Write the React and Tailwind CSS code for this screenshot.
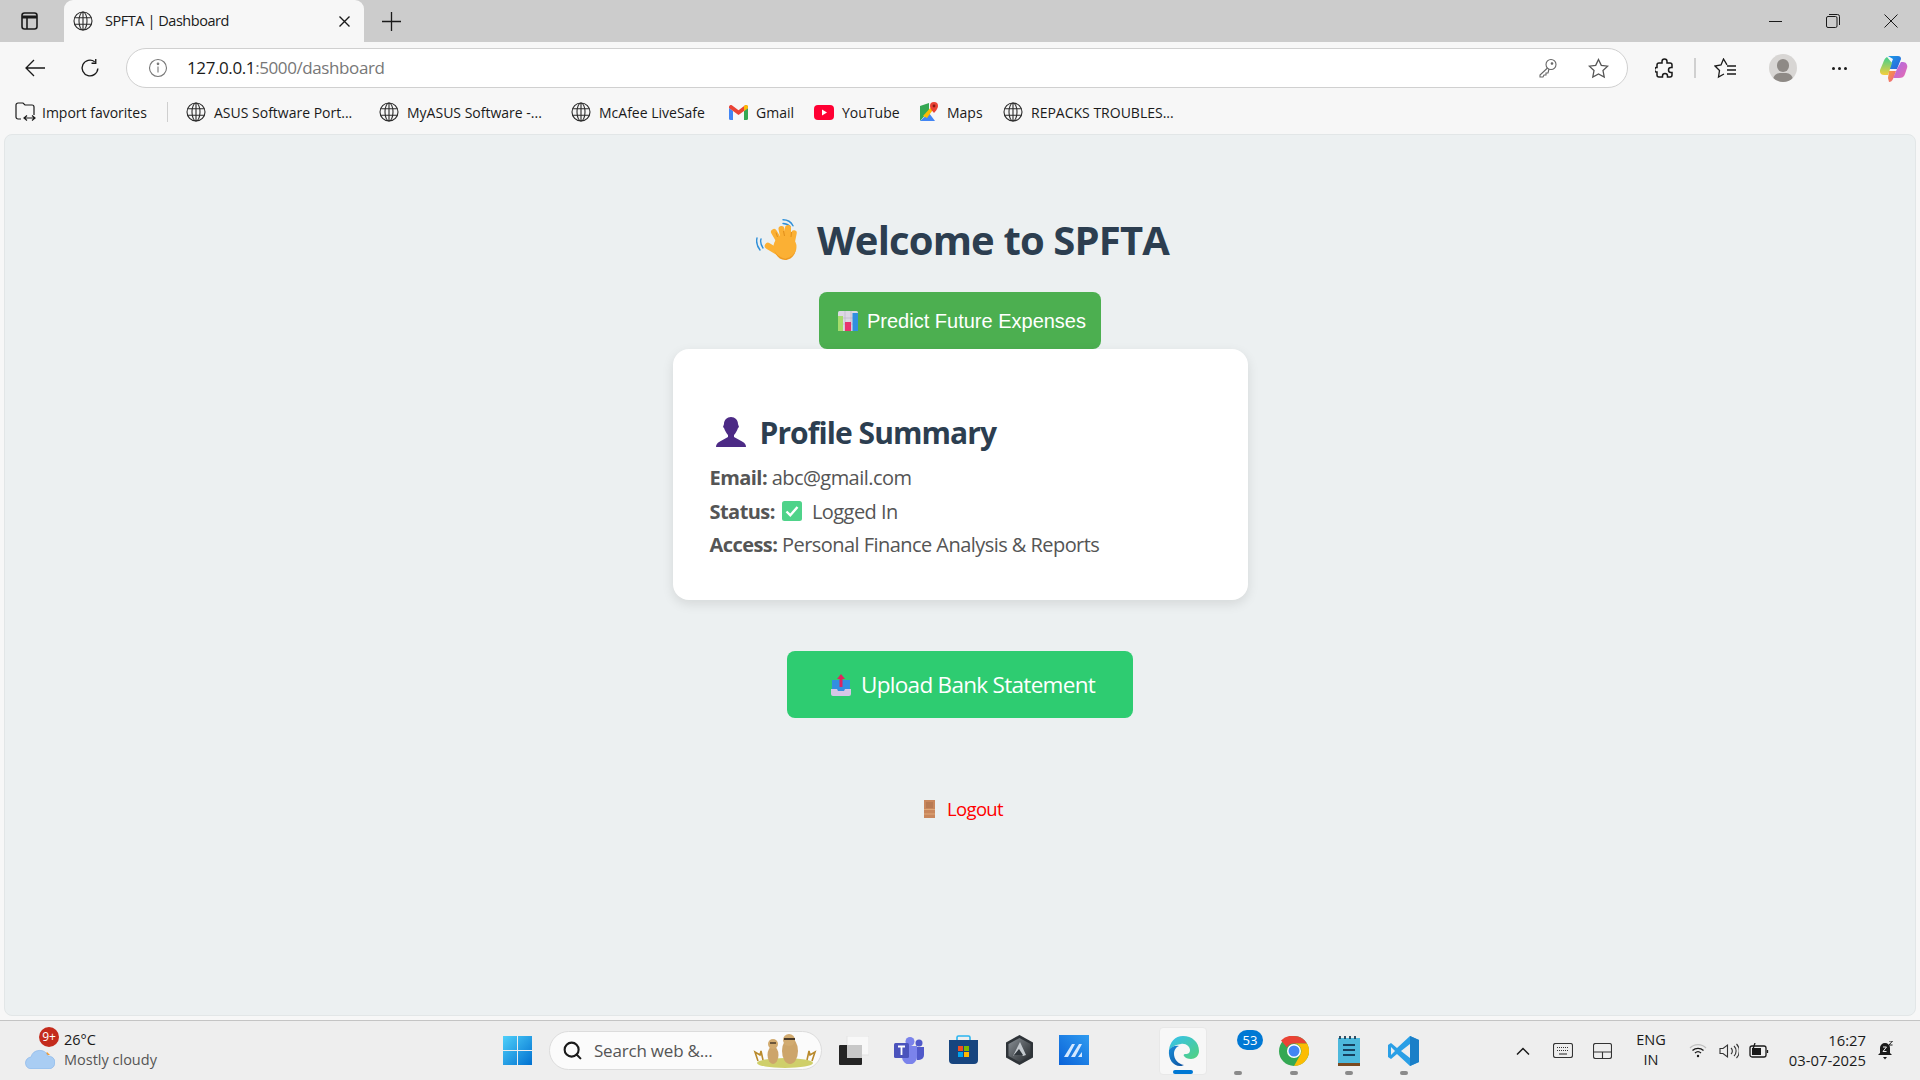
import { Search } from 'lucide-react';

const sans = "font-['Open_Sans','Noto_Sans',sans-serif]";

const Globe = ({ size = 20 }) => (
  <svg width={size} height={size} viewBox="0 0 20 20" fill="none" stroke="#2b2b2b" strokeWidth="1.1" className="shrink-0">
    <circle cx="10" cy="10" r="9" />
    <ellipse cx="10" cy="10" rx="4" ry="9" />
    <path d="M1.6 6.8h16.8M1.6 13.2h16.8M10 1v18" />
  </svg>
);

const Bookmark = ({ icon, label, width }) => (
  <div className={`flex items-center gap-[8px] shrink-0 ${width}`}>
    {icon}
    <span className="text-[14px] text-[#1a1a1a] whitespace-nowrap">{label}</span>
  </div>
);

const GmailIcon = () => (
  <svg width="19" height="15" viewBox="0 0 19 15" className="shrink-0">
    <path d="M0 3v10.5A1.5 1.5 0 0 0 1.5 15H4V6z" fill="#4285f4" />
    <path d="M19 3v10.5a1.5 1.5 0 0 1-1.5 1.5H15V6z" fill="#34a853" />
    <path d="M0 3l4 3 5.5 4L15 6l4-3V2c0-1.8-2-2.6-3.2-1.6L9.5 5.2 3.200.4C2 -.6 0 .2 0 2z" fill="#ea4335" />
    <path d="M15 6l4-3V2c0-1.800-2-2.600-3.200-1.600L15 1z" fill="#fbbc04" />
  </svg>
);

const YoutubeIcon = () => (
  <svg width="20" height="15" viewBox="0 0 20 15" className="shrink-0">
    <rect width="20" height="15" rx="4" fill="#ff0033" />
    <path d="M8 4.500l5 3-5 3z" fill="#fff" />
  </svg>
);

const MapsIcon = () => (
  <svg width="20" height="20" viewBox="0 0 20 20" className="shrink-0">
    <path d="M1 4l9-3v8L1 19z" fill="#34a853" />
    <path d="M1 19l9-8 6 8z" fill="#4285f4" />
    <path d="M4 14L14 3l2 2-8 11z" fill="#fbbc04" />
    <path d="M15 0a4 4 0 0 1 4 4c0 3-4 7-4 7s-4-4-4-7a4 4 0 0 1 4-4z" fill="#ea4335" />
    <circle cx="15" cy="4" r="1.400" fill="#8b1a12" />
  </svg>
);

const WaveEmoji = () => (
  <svg width="46" height="42" viewBox="0 0 46 42" className="shrink-0">
    <path d="M1 19c-1 4 0 8 3 12M5 20c-1 3 0 6 2 9" stroke="#2f8fd8" strokeWidth="1.400" fill="none" strokeLinecap="round" />
    <path d="M27 0.800c4 0 8 2 10 6M27 4.500c3 0 5 1 7 3" stroke="#2f8fd8" strokeWidth="1.400" fill="none" strokeLinecap="round" />
    <g stroke="#fbb034" strokeLinecap="round" fill="none">
      <path d="M25 25L18 13" strokeWidth="6" />
      <path d="M28 22L25.500 10" strokeWidth="6" />
      <path d="M32 22V9" strokeWidth="6" />
      <path d="M36 24l2-10" strokeWidth="5.500" />
      <path d="M22 33l-10-6" strokeWidth="6.500" />
    </g>
    <circle cx="29" cy="28" r="11.500" fill="#fbb034" />
    <path d="M21.500 18L20 13.500M28.500 17l-1-5M35 18l.5-5" stroke="#e08e1a" strokeWidth="1" fill="none" />
    <path d="M18 31c3 6 8 9 13 8 5-1 9-5 9-11 0 8-5 13-11 13-5 0-9-4-11-10z" fill="#ef9a1f" />
  </svg>
);

const ChartEmoji = () => (
  <svg width="20" height="20" viewBox="0 0 20 20" className="shrink-0">
    <rect width="20" height="20" rx="1.500" fill="#dcd8e4" />
    <path d="M0 7h20M0 13h20M7 0v20M13 0v20" stroke="#b9b3c6" strokeWidth=".6" />
    <rect x="0" y="5" width="5" height="15" fill="#a5dc6c" />
    <rect x="7" y="11" width="6" height="9" fill="#e8336f" />
    <rect x="14.500" y="2" width="5.500" height="18" fill="#2f8fe0" />
  </svg>
);

const PersonEmoji = () => (
  <svg width="30" height="30" viewBox="0 0 30 30" className="shrink-0">
    <path d="M15 0c4 0 7 3 7 7l1 3-1 1c-1 3-3 6-4 7v2l9 5c2 1 3 3 3 5H0c0-2 1-4 3-5l9-5v-2c-1-1-3-4-4-7l-1-1 1-3c0-4 3-7 7-7z" fill="#4c2a85" />
  </svg>
);

const CheckEmoji = () => (
  <svg width="20" height="20" viewBox="0 0 20 20" className="shrink-0">
    <rect width="20" height="20" rx="2.500" fill="#4fd38a" />
    <path d="M4.500 10.500l3.800 3.800 7.200-8.300" stroke="#fff" strokeWidth="2.400" fill="none" />
  </svg>
);

const UploadEmoji = () => (
  <svg width="20" height="22" viewBox="0 0 20 22" className="shrink-0">
    <path d="M1 6h18v12H1z" fill="#338fe0" />
    <path d="M0 15h6l1 2h6l1-2h6v5a2 2 0 0 1-2 2H2a2 2 0 0 1-2-2z" fill="#d6c6e6" />
    <path d="M10 0l4 5h-2.500v8h-3V5H6z" fill="#e0245e" />
  </svg>
);

const DoorEmoji = () => (
  <svg width="11" height="18" viewBox="0 0 11 18" className="shrink-0">
    <rect width="11" height="18" fill="#c9875c" />
    <path d="M0 9.500h11M0 14h11" stroke="#e0a878" strokeWidth="1" />
    <path d="M2 2h7v6H2z" fill="#b87a52" />
  </svg>
);

const TrayIcon = ({ children, width }) => (
  <div className={`flex items-center justify-center shrink-0 ${width}`}>{children}</div>
);

const App = () => {
  return (
    <div className={`w-[1920px] h-[1080px] overflow-hidden flex flex-col bg-[#f7f7f7] ${sans}`}>
      {/* tab strip */}
      <div className="h-[42px] bg-[#cccccc] flex items-end shrink-0">
        <div className="w-[64px] h-[42px] flex items-center pl-[21px]">
          <svg width="17" height="18" viewBox="0 0 17 18" fill="none" stroke="#1a1a1a" strokeWidth="1.600">
            <rect x="1" y="1" width="15" height="16" rx="2.500" />
            <path d="M1 5h15" strokeWidth="3" />
            <path d="M6 5v12" />
          </svg>
        </div>
        <div className="w-[300px] h-[42px] bg-[#f7f7f7] rounded-t-[9px] flex items-center pl-[9px] pr-[14px]">
          <Globe />
          <span className="ml-[12px] text-[14.500px] text-[#1a1a1a] tracking-[-0.45px] flex-1">SPFTA | Dashboard</span>
          <svg width="11" height="11" viewBox="0 0 11 11" stroke="#1a1a1a" strokeWidth="1.400"><path d="M.5.500l10 10M10.500.500l-10 10" /></svg>
        </div>
        <div className="w-[89px] h-[42px] flex items-center pl-[18px]">
          <svg width="19" height="19" viewBox="0 0 19 19" stroke="#1a1a1a" strokeWidth="1.300"><path d="M9.500 0v19M0 9.500h19" /></svg>
        </div>
        <div className="flex-1" />
        <div className="w-[176px] h-[42px] flex items-center pl-[25px] gap-[44px]">
          <div className="w-[13px] h-px bg-[#1a1a1a]" />
          <svg width="14" height="14" viewBox="0 0 14 14" fill="none" stroke="#1a1a1a" strokeWidth="1"><rect x=".5" y="2.500" width="10.500" height="11" rx="1.500" /><path d="M3 .5h8.500a2 2 0 0 1 2 2V11" /></svg>
          <svg width="14" height="14" viewBox="0 0 14 14" stroke="#1a1a1a" strokeWidth="1"><path d="M.5.500l13 13M13.500.500l-13 13" /></svg>
        </div>
      </div>

      {/* address bar */}
      <div className="h-[48px] flex items-center shrink-0 pt-[6px] pb-[2px]">
        <div className="w-[126px] flex items-center pl-[25px] gap-[35px]">
          <svg width="20" height="18" viewBox="0 0 20 18" fill="none" stroke="#1a1a1a" strokeWidth="1.300"><path d="M20 9H1M9 1L1 9l8 8" /></svg>
          <svg width="21" height="21" viewBox="0 0 20 20" fill="none" stroke="#1a1a1a" strokeWidth="1.300"><path d="M17 10a7.500 7.500 0 1 1-3-6.500" /><path d="M15 1v4h-4" /></svg>
        </div>
        <div className="w-[502px] flex-1 h-[40px] bg-white border border-[#d0d0d0] rounded-full flex items-center pl-[21px] pr-[18px]">
          <svg width="20" height="20" viewBox="0 0 20 20" fill="none" stroke="#777" strokeWidth="1.100"><circle cx="10" cy="10" r="8.500" /><path d="M10 8.500v6" /><circle cx="10" cy="5.800" r=".8" fill="#777" /></svg>
          <span className="ml-[19px] text-[17px] tracking-[-0.4px] text-[#1a1a1a]">127.0.0.1<span className="text-[#777777]">:5000/dashboard</span></span>
          <div className="flex-1" />
          <svg width="18" height="20" viewBox="0 0 18 20" fill="none" stroke="#666" strokeWidth="1.100"><circle cx="12" cy="6.500" r="5" /><path d="M8.500 10L1 17v2h3l1-2h2v-2h2l1-4" /><circle cx="13" cy="5.500" r=".8" fill="#666" /></svg>
          <svg className="ml-[31px]" width="21" height="21" viewBox="0 0 21 21" fill="none" stroke="#555" strokeWidth="1.300"><path d="M10.500 1.500l2.800 5.900 6.400.8-4.700 4.400 1.200 6.400-5.700-3.100L4.800 19l1.200-6.400L1.300 8.200l6.400-.8z" /></svg>
        </div>
        <div className="w-[292px] shrink-0 flex items-center pl-[27px]">
          <svg width="19" height="21" viewBox="0 0 19 21" fill="none" stroke="#1a1a1a" strokeWidth="1.500"><path d="M7 3.500a2.500 2.500 0 0 1 5 0V5h3a2 2 0 0 1 2 2v2.500h-1a2.500 2.500 0 0 0 0 5h1V17a2 2 0 0 1-2 2h-2.500v-1a2.500 2.500 0 0 0-5 0v1H4a2 2 0 0 1-2-2v-3H1a2.500 2.500 0 0 1 0-4.500h1V7a2 2 0 0 1 2-2h3z" /></svg>
          <div className="ml-[20px] w-[2px] h-[20px] bg-[#d0d0d0]" />
          <svg className="ml-[18px]" width="22" height="21" viewBox="0 0 22 21" fill="none" stroke="#1a1a1a" strokeWidth="1.300"><path d="M13 6.800L9.500 1 7 7 1 8l4.500 4.500L4.500 19 10 16" /><path d="M13 8h9M13 12h9M13 16h9" /></svg>
          <div className="ml-[33px] w-[28px] h-[28px] rounded-full bg-[#d8d6d4] overflow-hidden relative">
            <div className="absolute left-[8px] top-[5px] w-[12px] h-[13px] rounded-full bg-[#8e8a86]" />
            <div className="absolute left-[4px] top-[19px] w-[20px] h-[14px] rounded-full bg-[#8e8a86]" />
          </div>
          <div className="ml-[35px] flex gap-[3px]">
            <div className="w-[3px] h-[3px] rounded-full bg-[#1a1a1a]" />
            <div className="w-[3px] h-[3px] rounded-full bg-[#1a1a1a]" />
            <div className="w-[3px] h-[3px] rounded-full bg-[#1a1a1a]" />
          </div>
          <svg className="ml-[33px]" width="28" height="27" viewBox="0 0 28 27">
            <defs>
              <linearGradient id="cpA" x1="0" y1="0" x2="1" y2="1"><stop offset="0" stopColor="#1b9de8" /><stop offset="1" stopColor="#2e5fd8" /></linearGradient>
              <linearGradient id="cpB" x1="0" y1="0" x2="0" y2="1"><stop offset="0" stopColor="#3fcf8e" /><stop offset="1" stopColor="#f5cf3c" /></linearGradient>
              <linearGradient id="cpC" x1="0" y1="0" x2="1" y2="1"><stop offset="0" stopColor="#a86be8" /><stop offset="1" stopColor="#e86bb0" /></linearGradient>
              <linearGradient id="cpD" x1="0" y1="0" x2="1" y2="1"><stop offset="0" stopColor="#f5a03c" /><stop offset="1" stopColor="#f0588a" /></linearGradient>
            </defs>
            <path d="M8 1h10c2 0 3 1 3 3l-4 10H9L13 4z" fill="url(#cpA)" />
            <path d="M7 2c-2 1-3 3-4 6L0 15c-.5 3 1 5 4 5h4l4-12z" fill="url(#cpB)" />
            <path d="M21 7h2c3 0 5 3 4 6l-2 6c-1 3-3 4-6 4h-6l4-9z" fill="url(#cpC)" />
            <path d="M9 16h7l-3 8c-1 2-2 3-4 3l-1-4z" fill="url(#cpD)" />
          </svg>
        </div>
      </div>

      {/* favorites bar */}
      <div className="h-[44px] flex items-center shrink-0 pl-[15px]">
        <div className="flex items-center gap-[6px] w-[152px] shrink-0">
          <svg width="21" height="20" viewBox="0 0 21 20" fill="none" stroke="#1a1a1a" strokeWidth="1.200" className="shrink-0"><path d="M6 17H3a2 2 0 0 1-2-2V3a2 2 0 0 1 2-2h5l2 2h7a2 2 0 0 1 2 2v8" /><path d="M9 16h11M12 13.500L9 16l3 2.500M17 13.500l3 2.500-3 2.500" /></svg>
          <span className="text-[14px] text-[#1a1a1a] whitespace-nowrap">Import favorites</span>
        </div>
        <div className="w-px h-[20px] bg-[#cfcfcf] shrink-0 mr-[18px]" />
        <Bookmark icon={<Globe />} label="ASUS Software Port..." width="w-[193px]" />
        <Bookmark icon={<Globe />} label="MyASUS Software -..." width="w-[192px]" />
        <Bookmark icon={<Globe />} label="McAfee LiveSafe" width="w-[158px]" />
        <Bookmark icon={<GmailIcon />} label="Gmail" width="w-[85px]" />
        <Bookmark icon={<YoutubeIcon />} label="YouTube" width="w-[105px]" />
        <Bookmark icon={<MapsIcon />} label="Maps" width="w-[84px]" />
        <Bookmark icon={<Globe />} label="REPACKS TROUBLES..." width="w-[200px]" />
      </div>

      {/* page */}
      <main className="flex-1 mx-[4px] mb-[4px] bg-[#ecf0f1] rounded-[8px] border border-[#e2e6e7] flex flex-col items-center pt-[78px]">
        <h1 className="h-[54px] flex items-center gap-[15px] text-[40px] font-bold text-[#2c3e50] tracking-[-0.85px] pl-[5px]">
          <WaveEmoji />
          Welcome to SPFTA
        </h1>
        <a className="mt-[25px] h-[57px] w-[282px] bg-[#4caf50] rounded-[8px] flex items-center pl-[19px] pt-[1px] gap-[9px] text-white text-[20px] font-['Liberation_Sans',Arial,sans-serif]">
          <ChartEmoji />
          Predict Future Expenses
        </a>
        <section className="w-[575px] h-[251px] bg-white rounded-[16px] shadow-[0_4px_12px_rgba(0,0,0,0.1)] pt-[63px] pl-[37px]">
          <h2 className="h-[40px] flex items-center gap-[14px] pl-[6px] text-[30px] font-bold text-[#2c3e50] tracking-[-0.92px]">
            <PersonEmoji />
            Profile Summary
          </h2>
          <div className="mt-[9px] text-[20px] text-[#555555] tracking-[-0.55px] leading-[33.500px]">
            <p><strong className="font-bold">Email:</strong> abc@gmail.com</p>
            <p className="flex items-center"><strong className="font-bold">Status:</strong><span className="ml-[7px] mr-[10px]"><CheckEmoji /></span>Logged In</p>
            <p><strong className="font-bold">Access:</strong> Personal Finance Analysis &amp; Reports</p>
          </div>
        </section>
        <a className="mt-[51px] h-[67px] w-[346px] bg-[#2ecc71] rounded-[8px] flex items-center pl-[44px] gap-[10px] text-white text-[22.500px] tracking-[-0.7px]">
          <UploadEmoji />
          Upload Bank Statement
        </a>
        <a className="mt-[77px] h-[28px] flex items-center gap-[12px] text-[18.500px] text-[#ff0000] tracking-[-0.65px] pl-[7px]">
          <DoorEmoji />
          Logout
        </a>
      </main>

      {/* taskbar */}
      <footer className="h-[60px] shrink-0 bg-[#eeeeee] border-t border-[#c4c4c4] flex items-center">
        <div className="w-[503px] flex items-center pl-[25px] shrink-0">
          <div className="relative w-[39px] h-[50px] shrink-0">
            <svg className="absolute left-0 top-[23px]" width="30" height="20" viewBox="0 0 30 20">
              <path d="M20 6l2-3 3 3z" fill="#f59b2c" />
              <path d="M7 20a6 6 0 0 1-1-12 9 9 0 0 1 17-1 6.500 6.500 0 0 1 1 13z" fill="#a9cdf3" stroke="#7fb0e8" strokeWidth=".6" />
            </svg>
            <div className="absolute left-[14px] top-[1px] w-[20px] h-[20px] rounded-full bg-[#c42b1c] text-white text-[12px] leading-[20px] text-center">9+</div>
          </div>
          <div className="leading-[20px] text-[14.500px] mt-[-2px]">
            <div className="text-[#1a1a1a]">26°C</div>
            <div className="text-[#555555]">Mostly cloudy</div>
          </div>
        </div>
        <svg width="29" height="29" viewBox="0 0 29 29" className="shrink-0 mt-[-1px]">
          <defs>
            <linearGradient id="win" x1="0" y1="0" x2="1" y2="1"><stop offset="0" stopColor="#4fd0fa" /><stop offset="1" stopColor="#0070d0" /></linearGradient>
          </defs>
          <path d="M0 0h14v14H0zM15 0h14v14H15zM0 15h14v14H0zM15 15h14v14H15z" fill="url(#win)" />
        </svg>
        <div className="ml-[17px] w-[273px] h-[39px] bg-[#fbfbfb] border border-[#dcdcdc] rounded-full flex items-center pl-[12px] shrink-0 relative overflow-hidden">
          <Search size={21} strokeWidth={2.4} color="#1a1a1a" />
          <span className="ml-[11px] text-[17px] text-[#555555] tracking-[-0.2px]">Search web &amp;...</span>
          <svg className="absolute right-[3px] top-[2px]" width="66" height="34" viewBox="0 0 66 34">
            <ellipse cx="33" cy="29" rx="28" ry="5" fill="#cfcf6a" />
            <path d="M6 27l-3-9 5 3 1-4 2 9M60 27l3-9-5 3-1-4-2 9" stroke="#b98a2c" strokeWidth="1.600" fill="none" />
            <ellipse cx="21" cy="21" rx="5.500" ry="9" fill="#cda56a" />
            <circle cx="21" cy="10" r="5" fill="#d2ab70" />
            <ellipse cx="38" cy="17" rx="8" ry="13" fill="#cda56a" />
            <circle cx="37" cy="6" r="6" fill="#d2ab70" />
            <path d="M32 5h11" stroke="#4a3a28" strokeWidth="2" />
            <path d="M18 9h6" stroke="#4a3a28" strokeWidth="1.600" />
          </svg>
        </div>

        <div className="flex items-center shrink-0 ml-[17px] mt-[-1px]">
          {/* task view */}
          <svg width="30" height="29" viewBox="0 0 30 29">
            <rect x="8" y="0" width="22" height="19" fill="#f8f8f8" stroke="#e4e4e4" />
            <rect x="0" y="9" width="23" height="20" rx="1" fill="#242424" />
            <rect x="8" y="9" width="15" height="13" fill="#c8c8c8" />
          </svg>
          {/* teams */}
          <svg className="ml-[25px]" width="30" height="27" viewBox="0 0 30 27">
            <circle cx="25" cy="6" r="3.500" fill="#5059c9" />
            <path d="M20 10h10v8a5 5 0 0 1-5 5h-2z" fill="#5059c9" />
            <circle cx="16" cy="4.500" r="4.500" fill="#7b83eb" />
            <path d="M8 9h15v11a7 7 0 0 1-15 0z" fill="#7b83eb" />
            <rect x="0" y="6" width="15" height="15" rx="1.500" fill="#4b53bc" />
            <path d="M4 9.500h7M7.500 9.500V18" stroke="#fff" strokeWidth="1.800" />
          </svg>
          {/* store */}
          <svg className="ml-[25px]" width="29" height="30" viewBox="0 0 29 30">
            <path d="M8 5V2.500A1.500 1.500 0 0 1 9.500 1h10A1.500 1.500 0 0 1 21 2.500V5" stroke="#2bb5f0" strokeWidth="1.600" fill="none" />
            <path d="M0 5h29v20a4 4 0 0 1-4 4H4a4 4 0 0 1-4-4z" fill="#17457f" />
            <path d="M9 11h5v5H9z" fill="#f25022" />
            <path d="M15 11h5v5h-5z" fill="#7fba00" />
            <path d="M9 17h5v5H9z" fill="#00a4ef" />
            <path d="M15 17h5v5h-5z" fill="#ffb900" />
          </svg>
          {/* hexagon app */}
          <svg className="ml-[28px]" width="27" height="30" viewBox="0 0 27 30">
            <defs>
              <linearGradient id="hex" x1="0" y1="0" x2="1" y2="1"><stop offset="0" stopColor="#8a9096" /><stop offset="1" stopColor="#24282c" /></linearGradient>
            </defs>
            <path d="M13.500 0L27 7.500v15L13.500 30 0 22.500v-15z" fill="#2e3338" />
            <path d="M13.500 3L24.500 9v12L13.500 27 2.500 21V9z" fill="url(#hex)" />
            <path d="M14 7l6 13-3 1-4-5-6 5z" fill="#c4c9ce" />
            <path d="M13 14l-5 6h9z" fill="#30363c" />
          </svg>
          {/* myasus */}
          <svg className="ml-[26px]" width="30" height="30" viewBox="0 0 30 30">
            <defs>
              <linearGradient id="asus" x1="0" y1="1" x2="1" y2="0"><stop offset="0" stopColor="#0a62d8" /><stop offset="1" stopColor="#2f9bf0" /></linearGradient>
            </defs>
            <rect width="30" height="30" fill="url(#asus)" />
            <path d="M5 22l8-13h3L9 22zM12 22l8-13h3L16 22zM23 17v5h-4z" fill="#d4e8ff" />
          </svg>
        </div>

        {/* running apps */}
        <div className="ml-[70px] relative w-[48px] h-[48px] bg-[#f7f7f7] rounded-[4px] border border-[#e8e8e8] flex items-center justify-center shrink-0">
          <svg width="31" height="30" viewBox="0 0 31 30">
            <defs>
              <linearGradient id="edgeA" x1="0" y1="0" x2="1" y2="1"><stop offset="0" stopColor="#35c1f1" /><stop offset="1" stopColor="#52d17c" /></linearGradient>
              <linearGradient id="edgeB" x1="0" y1="0" x2="1" y2="1"><stop offset="0" stopColor="#1a8ed8" /><stop offset="1" stopColor="#0b4f9e" /></linearGradient>
            </defs>
            <path d="M15 0c9 0 16 6 16 15 0 5-4 8-8 8-3 0-6-1-7-3-1-1 0-2 1-2 2 0 5 0 5-4 0-3-4-7-9-6C6 9 3 12 1 14 2 6 7 0 15 0z" fill="url(#edgeA)" />
            <path d="M1 14c2-3 6-5 10-4-3 1-5 4-5 8 0 5 4 10 10 11-2 1-3 1-4 1C5 30 0 23 1 14z" fill="url(#edgeB)" />
          </svg>
          <div className="absolute left-[13px] bottom-0 w-[20px] h-[4px] rounded-full bg-[#0078d4]" />
        </div>

        <div className="ml-[18px] relative w-[45px] h-[48px] shrink-0">
          <div className="absolute left-[12px] top-[3px] w-[26px] h-[20px] rounded-full bg-[#0078d4] text-white text-[13px] leading-[20px] text-center">53</div>
          <div className="absolute left-[9px] bottom-0 w-[8px] h-[4px] rounded-full bg-[#8a8a8a]" />
        </div>
        <div className="ml-[9px] relative w-[30px] h-[48px] flex items-center shrink-0">
          <svg width="30" height="30" viewBox="0 0 30 30">
            <circle cx="15" cy="15" r="15" fill="#34a853" />
            <path d="M15 0a15 15 0 0 1 13 7.500H15a7.500 7.500 0 0 0-7 4L2 4.500A15 15 0 0 1 15 0z" fill="#ea4335" />
            <path d="M28 7.500A15 15 0 0 1 15 30l6.500-11.500A7.500 7.500 0 0 0 15 7.500z" fill="#fbbc04" />
            <circle cx="15" cy="15" r="7" fill="#fff" />
            <circle cx="15" cy="15" r="5.500" fill="#4285f4" />
          </svg>
          <div className="absolute left-[11px] bottom-0 w-[8px] h-[4px] rounded-full bg-[#8a8a8a]" />
        </div>
        <div className="ml-[29px] relative w-[22px] h-[48px] flex items-center shrink-0">
          <svg width="22" height="30" viewBox="0 0 22 30">
            <rect y="2" width="22" height="26" fill="#4db8dc" />
            <rect y="27" width="22" height="3" fill="#7a4a20" />
            <path d="M2 0v3M7 0v3M12 0v3M17 0v3" stroke="#1f3f55" strokeWidth="1.800" />
            <path d="M5 9h12M5 14h12M5 19h12" stroke="#17405f" strokeWidth="1.800" />
          </svg>
          <div className="absolute left-[7px] bottom-0 w-[8px] h-[4px] rounded-full bg-[#8a8a8a]" />
        </div>
        <div className="ml-[28px] relative w-[31px] h-[48px] flex items-center shrink-0">
          <svg width="31" height="30" viewBox="0 0 31 30">
            <path d="M22 0l9 4v22l-9 4-13-12-6 5-3-2V9l3-2 6 5z" fill="#2a9fe6" />
            <path d="M22 0l9 4v22l-9 4z" fill="#1a7fc8" />
            <path d="M22 8v14l-9-7z" fill="#eeeeee" />
            <path d="M3 11l4 4-4 4z" fill="#eeeeee" />
          </svg>
          <div className="absolute left-[12px] bottom-0 w-[8px] h-[4px] rounded-full bg-[#8a8a8a]" />
        </div>

        {/* system tray */}
        <div className="ml-[97px] flex items-center shrink-0 text-[#1a1a1a]">
          <TrayIcon width="w-[14px]">
            <svg width="14" height="8" viewBox="0 0 14 8" fill="none" stroke="#1a1a1a" strokeWidth="1.500"><path d="M1 7.500l6-6 6 6" /></svg>
          </TrayIcon>
          <TrayIcon width="w-[20px] ml-[23px]">
            <svg width="20" height="15" viewBox="0 0 20 15" fill="none" stroke="#333" strokeWidth="1.100"><rect x=".5" y=".5" width="19" height="14" rx="2" /><path d="M4 4.500h12M4 7.500h12" strokeDasharray="1 1" /><path d="M6 11h8" /></svg>
          </TrayIcon>
          <TrayIcon width="w-[19px] ml-[20px]">
            <svg width="19" height="16" viewBox="0 0 19 16" fill="none" stroke="#333" strokeWidth="1.100"><rect x=".5" y=".5" width="18" height="15" rx="2" /><path d="M.5 9h18M9.500 9v6.500" /></svg>
          </TrayIcon>
          <div className="ml-[25px] w-[28px] text-center text-[14.500px] leading-[20px] whitespace-nowrap flex flex-col items-center mt-[-2px]">
            <div>ENG</div>
            <div>IN</div>
          </div>
          <TrayIcon width="w-[18px] ml-[24px]">
            <svg width="18" height="15" viewBox="0 0 18 15" fill="none" strokeWidth="1.300"><path d="M1 5a11 11 0 0 1 16 0" stroke="#c0c0c0" /><path d="M3.500 7.500a8 8 0 0 1 11 0M6 10a4.500 4.500 0 0 1 6 0" stroke="#1a1a1a" /><circle cx="9" cy="13" r="1.200" fill="#1a1a1a" /></svg>
          </TrayIcon>
          <TrayIcon width="w-[20px] ml-[12px]">
            <svg width="20" height="16" viewBox="0 0 20 16" fill="none" stroke="#333" strokeWidth="1.100"><path d="M1 5.500h3L8.500 2v12L4 10.500H1z" /><path d="M12 5a4 4 0 0 1 0 6M15 3a7 7 0 0 1 0 10M17.500 1a10 10 0 0 1 0 14" /></svg>
          </TrayIcon>
          <TrayIcon width="w-[20px] ml-[10px]">
            <svg width="20" height="16" viewBox="0 0 20 16" fill="none" stroke="#1a1a1a" strokeWidth="1.300"><rect x="1" y="3" width="16" height="11" rx="2" /><path d="M18.500 7v3" /><path d="M3 5h9v7H3z" fill="#1a1a1a" stroke="none" /><path d="M6 0L4 6h3l-1 5" stroke="#1a1a1a" /></svg>
          </TrayIcon>
          <div className="ml-[10px] w-[87px] text-right text-[14.800px] leading-[20px] mt-[-1px]">
            <div>16:27</div>
            <div>03-07-2025</div>
          </div>
          <TrayIcon width="w-[16px] ml-[11px]">
            <svg width="16" height="19" viewBox="0 0 16 19">
              <path d="M8 2a5 5 0 0 1 5 5v5l2 2H1l2-2V7a5 5 0 0 1 5-5z" fill="#1a1a1a" />
              <path d="M6 16h4l-2 2.500z" fill="#1a1a1a" />
              <path d="M6 6h3.500L6 10.500h3.500" stroke="#eeeeee" strokeWidth="1" fill="none" />
              <path d="M12 0h3.500L12 4h3.500" stroke="#1a1a1a" strokeWidth="1" fill="none" />
            </svg>
          </TrayIcon>
        </div>
      </footer>
    </div>
  );
};

export default App;
